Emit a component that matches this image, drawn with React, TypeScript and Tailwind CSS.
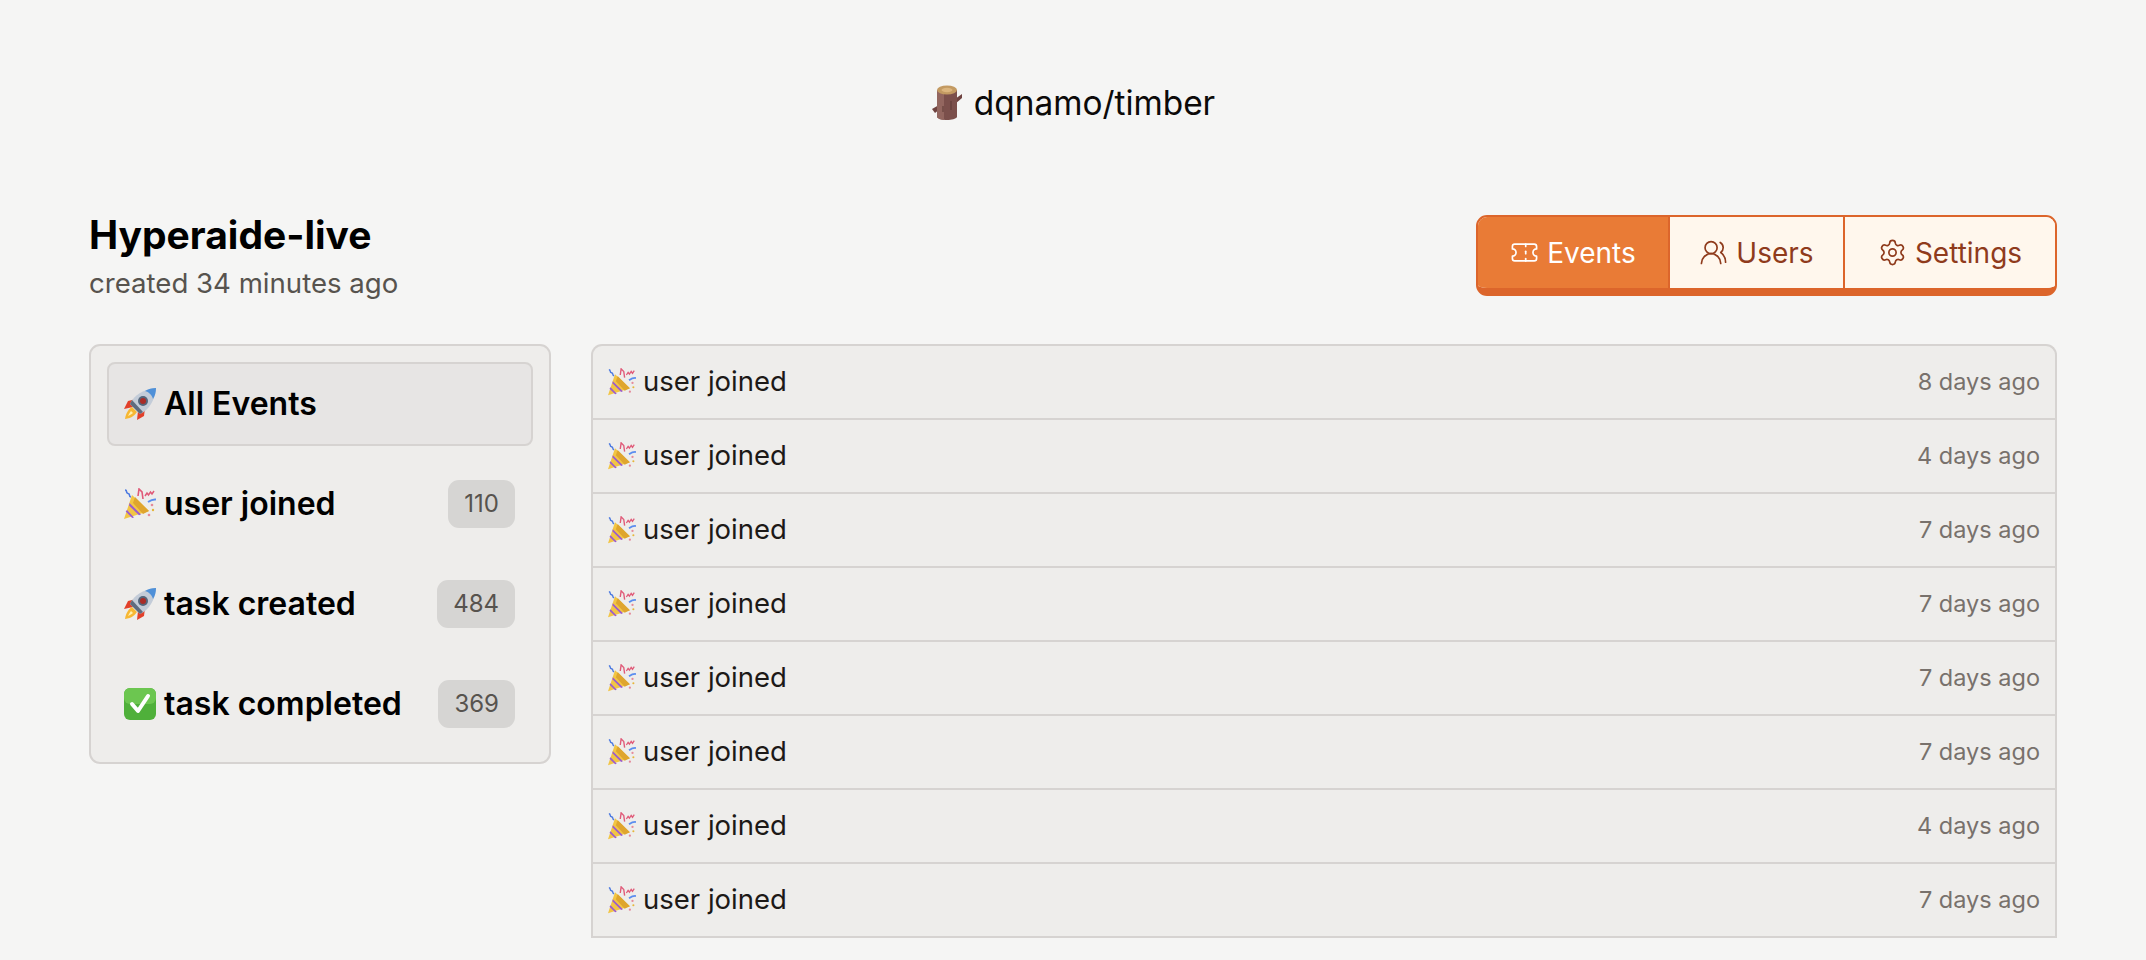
import { Ticket, UsersRound, Settings } from "lucide-react";

function Log({ className = "" }: { className?: string }) {
  return (
    <svg viewBox="0 0 32 36" className={className}>
      <path d="M1 24l7-4 1 4-5 4z" fill="#6f4340" />
      <path d="M31 9l-7 5v5l7-6z" fill="#6f4340" />
      <path d="M6 5h20v27c-2 4-18 4-20 0z" fill="#7b4f4b" />
      <path d="M6 5h7v30c-3 0-6-1-7-3z" fill="#93665f" />
      <ellipse cx="16" cy="5" rx="10" ry="4.500" fill="#c39a62" />
      <ellipse cx="16" cy="5" rx="5.500" ry="2.200" fill="#dcb57d" />
      <path d="M20 16v9M12 21v6" stroke="#5c3835" strokeWidth="1" />
    </svg>
  );
}

function Rocket({ className = "" }: { className?: string }) {
  return (
    <svg viewBox="0 0 32 32" className={className}>
      <path d="M12 11L4 13 0 21l9-2z" fill="#e2402a" />
      <path d="M21 20l-1 8-7 4 1-9z" fill="#e2402a" />
      <path d="M8 19c-3 2-6 5-7 12 7-1 10-4 12-7z" fill="#f7b733" />
      <path d="M7 23c-1 1-2 3-3 5 2-1 4-2 5-3z" fill="#fff1b0" />
      <path d="M6 16C10 7 20 1 32 0c-1 12-7 22-16 26z" fill="#c3ccd8" />
      <path d="M6 16l10 10 3-2-11-12z" fill="#5f6c7e" />
      <path d="M32 0c-4 0-8 1-11 3 4 1 7 4 8 8 2-3 3-7 3-11z" fill="#4f90d8" />
      <circle cx="19" cy="13" r="5" fill="#55657a" />
      <circle cx="19" cy="13" r="3" fill="#a92c28" />
    </svg>
  );
}

function Party({ className = "" }: { className?: string }) {
  return (
    <svg viewBox="0 0 32 32" className={className}>
      <path d="M0 31L8 7l17 16z" fill="#f2c544" />
      <path d="M11 9l14 14-6 3-10-11z" fill="#dfa52e" />
      <path d="M3 22l7 7.500-1.800.6-6.500-6.500z" fill="#9a5bd0" />
      <path d="M5.500 15l11.500 11.500-2 .8L5 17.500z" fill="#9a5bd0" />
      <path d="M24 14c3-2 5-3 8-2.500" stroke="#5b8def" strokeWidth="2" fill="none" />
      <path d="M14 8l1-7 3 3 1 7" stroke="#e05a78" strokeWidth="1.600" fill="none" />
      <path d="M1 2c3 0 0 3 3 3.500s0 3 3 3.500" stroke="#4a78e0" strokeWidth="1.600" fill="none" />
      <path d="M21 8l2-3 1.500 2 2-3 1.500 2 2-3" stroke="#e05a78" strokeWidth="1.500" fill="none" />
      <circle cx="28" cy="17" r="1.300" fill="#e58a9a" />
      <circle cx="25" cy="27" r="1.300" fill="#e58a9a" />
      <circle cx="29" cy="22" r="1.200" fill="#e6b63a" />
    </svg>
  );
}

function Check({ className = "" }: { className?: string }) {
  return (
    <svg viewBox="0 0 32 32" className={className}>
      <rect x="0" y="0" width="32" height="32" rx="6" fill="#4fb03a" />
      <rect x="0" y="0" width="32" height="16" rx="6" fill="#6cc650" />
      <path d="M8 16l6 7 10-15" stroke="#fff" strokeWidth="4" fill="none" strokeLinecap="round" strokeLinejoin="round" />
    </svg>
  );
}

const items = [
  { icon: Party, label: "user joined", count: "110" },
  { icon: Rocket, label: "task created", count: "484" },
  { icon: Check, label: "task completed", count: "369" },
];
const rows = ["8 days ago", "4 days ago", "7 days ago", "7 days ago", "7 days ago", "7 days ago", "4 days ago", "7 days ago"];

export default function App() {
  return (
    <div className="h-[960px] overflow-hidden bg-[#f5f5f4] font-['Inter',sans-serif] text-black">
      <header className="flex h-[206px] items-center justify-center">
        <div className="flex items-center gap-[11px]">
          <Log className="h-[36px] w-[32px]" />
          <span className="text-[33.4px] leading-[36px] text-[#0c0a09]">dqnamo/timber</span>
        </div>
      </header>
      <main className="px-[89px]">
        <div className="flex items-start justify-between">
          <div className="pt-[7px]">
            <h1 className="text-[39px] leading-[44px] font-bold text-black">Hyperaide-live</h1>
            <p className="mt-[8px] text-[27.6px] leading-[36px] text-[#57534e]">created 34 minutes ago</p>
          </div>
          <nav className="mt-[9px] flex h-[81px] overflow-hidden rounded-[11px] border-2 border-b-[8px] border-[#dc652b] text-[28px]">
            <a className="flex w-[190px] items-center justify-center gap-[8px] bg-[#e97b36] text-white">
              <Ticket size={29} strokeWidth={1.4} />Events
            </a>
            <a className="flex w-[175px] items-center justify-center gap-[8px] border-l-2 border-[#dc652b] bg-[#fff7ed] text-[#8f3b1c]">
              <UsersRound size={29} strokeWidth={1.4} />Users
            </a>
            <a className="flex w-[212px] items-center justify-center gap-[8px] border-l-2 border-[#dc652b] bg-[#fff7ed] text-[#8f3b1c]">
              <Settings size={29} strokeWidth={1.4} />Settings
            </a>
          </nav>
        </div>
        <div className="mt-[43px] flex items-start gap-[40px]">
          <aside className="w-[462px] shrink-0 rounded-[11px] border-2 border-[#d6d3d1] bg-[#eeedeb] p-[16px]">
            <div className="flex h-[84px] items-center gap-[8px] rounded-[8px] border-2 border-[#d6d3d1] bg-[#e7e5e4] px-[15px] text-[32px] font-semibold">
              <Rocket className="h-[32px] w-[32px]" />All Events
            </div>
            {items.map((it) => (
              <div key={it.label} className="mt-[16px] flex h-[84px] items-center justify-between pl-[17px] pr-[18px]">
                <span className="flex items-center gap-[8px] text-[32px] font-semibold">
                  <it.icon className="h-[32px] w-[32px]" />{it.label}
                </span>
                <span className="flex h-[48px] items-center rounded-[11px] bg-[#d6d5d3] px-[16px] text-[24px] text-[#57534e]">{it.count}</span>
              </div>
            ))}
          </aside>
          <section className="flex-1 overflow-hidden rounded-t-[11px] border-2 border-b-0 border-[#d6d3d1] bg-[#eeedeb]">
            {rows.map((r, i) => (
              <div key={i} className="flex h-[74px] items-center justify-between border-b-2 border-[#d6d3d1] px-[15px]">
                <span className="flex items-center gap-[7px] text-[27.5px] text-[#1c1917]">
                  <Party className="h-[28px] w-[28px]" />user joined
                </span>
                <span className="text-[23.5px] text-[#78716c]">{r}</span>
              </div>
            ))}
          </section>
        </div>
      </main>
    </div>
  );
}
